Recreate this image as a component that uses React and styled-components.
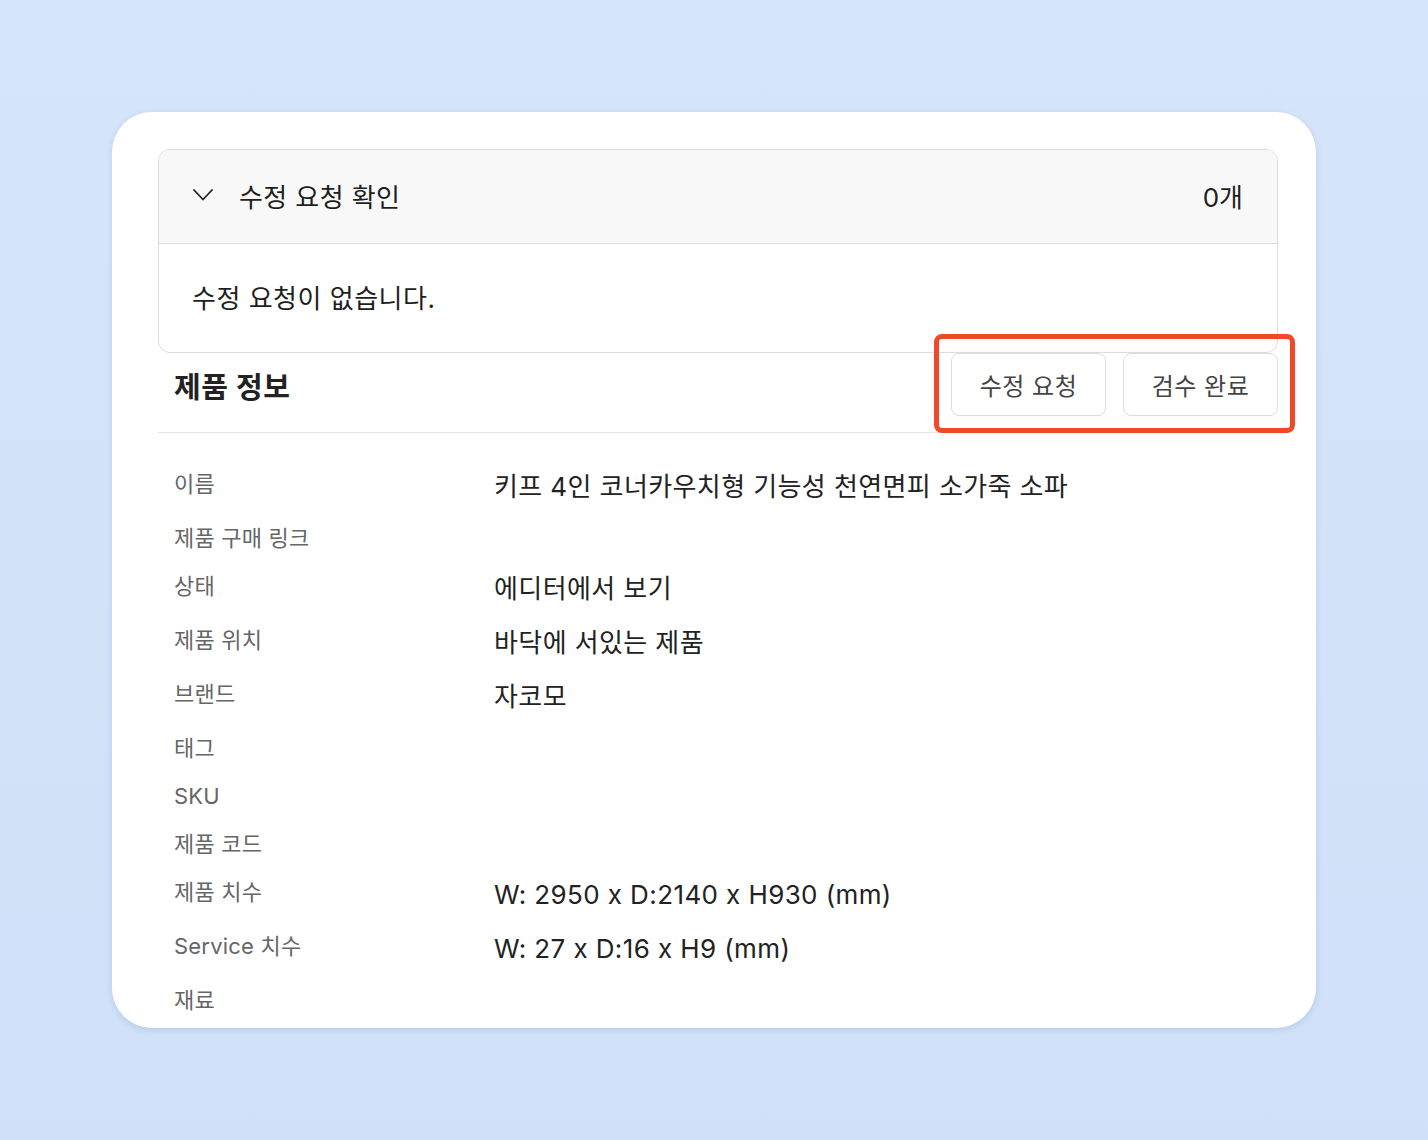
import React from "react";
import styled, { createGlobalStyle } from "styled-components";

const GlobalStyle = createGlobalStyle`
  html, body {
    margin: 0;
    padding: 0;
  }
  body {
    background: linear-gradient(180deg, #d6e5fb 0%, #cfe0f8 100%);
    font-family: Inter, "Noto Sans CJK KR", sans-serif;
    min-height: 1140px;
  }
`;

const rows = [
  { label: "이름", value: "키프 4인 코너카우치형 기능성 천연면피 소가죽 소파" },
  { label: "제품 구매 링크" },
  { label: "상태", value: "에디터에서 보기" },
  { label: "제품 위치", value: "바닥에 서있는 제품" },
  { label: "브랜드", value: "자코모" },
  { label: "태그" },
  { label: "SKU" },
  { label: "제품 코드" },
  { label: "제품 치수", value: "W: 2950 x D:2140 x H930 (mm)" },
  { label: "Service 치수", value: "W: 27 x D:16 x H9 (mm)" },
  { label: "재료" },
];

function Chevron() {
  return (
    <svg width="20" height="12" viewBox="0 0 20 12" fill="none">
      <polyline
        points="1,1 10,10.5 19,1"
        stroke="#222"
        strokeWidth="1.8"
        strokeLinecap="round"
        strokeLinejoin="round"
      />
    </svg>
  );
}

export default function App() {
  return (
    <>
      <GlobalStyle />
      <Page>
        <Card>
          <Accordion>
            <AccordionHeader>
              <HeaderLeft>
                <Chevron />
                <HeaderTitle>수정 요청 확인</HeaderTitle>
              </HeaderLeft>
              <Count>0개</Count>
            </AccordionHeader>
            <AccordionBody>수정 요청이 없습니다.</AccordionBody>
          </Accordion>

          <SectionHead>
            <SectionTitle>제품 정보</SectionTitle>
            <Actions>
              <Btn>수정 요청</Btn>
              <Btn>검수 완료</Btn>
              <Highlight />
            </Actions>
          </SectionHead>

          <InfoList>
            {rows.map((row) => (
              <InfoRow key={row.label} $hasValue={!!row.value}>
                <Label>{row.label}</Label>
                {row.value && <Value>{row.value}</Value>}
              </InfoRow>
            ))}
          </InfoList>
        </Card>
      </Page>
    </>
  );
}

const Page = styled.div`
  padding: 112px 112px 0 112px;
  height: 1140px;
  box-sizing: border-box;
`;

const Card = styled.div`
  width: 1204px;
  height: 916px;
  box-sizing: border-box;
  background: #fff;
  border-radius: 40px;
  padding: 37px 38px 0 46px;
  overflow: hidden;
  box-shadow: 0 2px 6px rgba(80, 110, 160, 0.18);
`;

const Accordion = styled.div`
  border: 1.5px solid #dcdcdc;
  border-radius: 12px;
  overflow: hidden;
  position: relative;
  z-index: 1;
  background: #fff;
`;

const AccordionHeader = styled.div`
  display: flex;
  align-items: center;
  justify-content: space-between;
  height: 94px;
  padding: 0 34px 3px 34px;
  box-sizing: border-box;
  background: #f8f8f8;
  border-bottom: 1.5px solid #dcdcdc;
`;

const HeaderLeft = styled.div`
  display: flex;
  align-items: center;
  gap: 26px;
`;

const HeaderTitle = styled.span`
  font-size: 26px;
  letter-spacing: 0.4px;
  color: #1e1e1e;
`;

const Count = styled.span`
  font-size: 26px;
  color: #1e1e1e;
`;

const AccordionBody = styled.div`
  height: 108px;
  display: flex;
  align-items: center;
  padding: 0 33px 4px;
  box-sizing: border-box;
  font-size: 26px;
  letter-spacing: 0.5px;
  color: #1e1e1e;
`;

const SectionHead = styled.div`
  display: flex;
  align-items: flex-start;
  justify-content: space-between;
  padding: 0 0 0 16px;
  border-bottom: 1.5px solid #e4e4e4;
  height: 79px;
`;

const SectionTitle = styled.h2`
  margin: 11px 0 0;
  font-size: 29px;
  letter-spacing: 0.6px;
  font-weight: 700;
  color: #222;
`;

const Actions = styled.div`
  position: relative;
  display: flex;
  gap: 17px;
`;

const Btn = styled.button`
  font-family: inherit;
  height: 63px;
  width: 155px;
  padding: 0;
  background: #fff;
  border: 1.5px solid #dcdcdc;
  border-radius: 8px;
  font-size: 24px;
  letter-spacing: 0.5px;
  color: #444;
  cursor: pointer;
`;

const Highlight = styled.div`
  position: absolute;
  left: -17px;
  right: -17px;
  top: -19px;
  bottom: -17px;
  border: 5px solid #f0492a;
  border-radius: 8px;
  pointer-events: none;
  z-index: 2;
`;

const InfoList = styled.div`
  padding: 27px 0 0 16px;
`;

const InfoRow = styled.div`
  display: grid;
  grid-template-columns: 320px 1fr;
  align-items: start;
  padding: 6px 0;
  height: ${(p) => (p.$hasValue ? "42px" : "36px")};
`;

const Label = styled.div`
  font-size: 22px;
  letter-spacing: 0.2px;
  line-height: 36px;
  color: #666;
`;

const Value = styled.div`
  font-size: 26px;
  letter-spacing: 0.4px;
  line-height: 42px;
  color: #222;
`;
